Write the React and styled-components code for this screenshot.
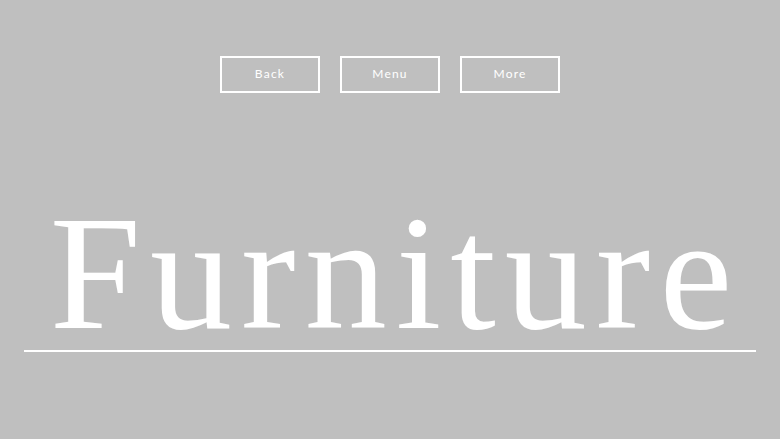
import styled, { createGlobalStyle } from 'styled-components'

const GlobalStyle = createGlobalStyle`
  html, body {
    margin: 0;
    padding: 0;
    background: #bfbfbf;
  }
`

const Page = styled.div`
  width: 780px;
  height: 439px;
  background: #bfbfbf;
  display: flex;
  flex-direction: column;
  align-items: center;
  overflow: hidden;
`

const Nav = styled.nav`
  display: flex;
  gap: 20px;
  margin-top: 56px;
`

const NavButton = styled.button`
  width: 100px;
  height: 37px;
  box-sizing: border-box;
  background: transparent;
  border: 2px solid #fff;
  color: #fff;
  font-family: 'Lato', 'Open Sans', sans-serif;
  font-weight: 400;
  font-size: 12px;
  letter-spacing: 1.2px;
  padding: 0 0 2px;
  cursor: pointer;
`

const Hero = styled.header`
  width: 732px;
  margin-top: 110px;
  display: flex;
  flex-direction: column;
  align-items: center;
`

const Title = styled.h1`
  margin: 0;
  padding-left: 11px;
  font-family: 'Liberation Serif', 'DejaVu Serif', serif;
  font-weight: 400;
  font-size: 164px;
  line-height: 140px;
  letter-spacing: 9px;
  color: #fff;
`

const Rule = styled.hr`
  width: 100%;
  margin: 7px 0 0;
  border: 0;
  border-top: 2px solid #fff;
`

export default function App() {
  return (
    <>
      <GlobalStyle />
      <Page>
        <Nav>
          {['Back', 'Menu', 'More'].map((label) => (
            <NavButton key={label}>{label}</NavButton>
          ))}
        </Nav>
        <Hero>
          <Title>Furniture</Title>
          <Rule />
        </Hero>
      </Page>
    </>
  )
}
